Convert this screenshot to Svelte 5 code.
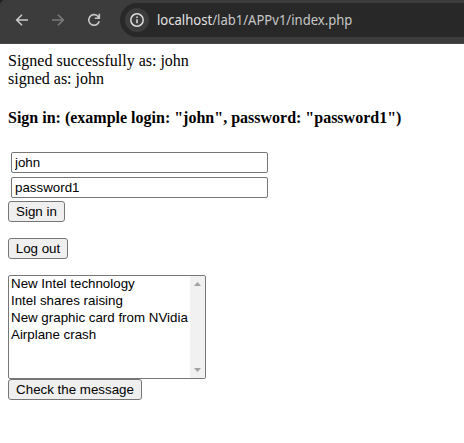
<script>
  let login = $state('john');
  let password = $state('password1');
  const messages = [
    'New Intel technology',
    'Intel shares raising',
    'New graphic card from NVidia',
    'Airplane crash'
  ];
</script>

<div class="window">
  <header class="toolbar">
    <svg class="icon" viewBox="0 0 16 16"><path d="M14 8H3M8 2.7 2.7 8 8 13.3" /></svg>
    <svg class="icon dim" viewBox="0 0 16 16"><path d="M2 8h11M8 2.7 13.3 8 8 13.3" /></svg>
    <svg class="icon" viewBox="0 0 16 16"><path d="M13.2 9.2A5.3 5.3 0 1 1 11.8 4.2L13.3 5.8M13.3 1.8V6.3H8.8" /></svg>
    <div class="address">
      <span class="info">
        <svg viewBox="0 0 16 16"><circle cx="8" cy="8" r="6.2" /><path d="M8 7.2v4M8 4.5v1.5" /></svg>
      </span>
      <span class="url"><b>localhost</b>/lab1/APPv1/index.php</span>
    </div>
  </header>
  <main>
    <div class="line">Signed successfully as: john</div>
    <div class="line">signed as: john</div>
    <h4>Sign in: (example login: "john", password: "password1")</h4>
    <div class="fields">
      <input type="text" bind:value={login} />
      <input type="text" bind:value={password} />
    </div>
    <button class="signin">Sign in</button>
    <button class="logout">Log out</button>
    <div class="list">
      <ul>
        {#each messages as message}
          <li>{message}</li>
        {/each}
      </ul>
      <div class="scroll">
        <svg viewBox="0 0 7 4"><path d="M0 4 3.5 0 7 4z" /></svg>
        <svg viewBox="0 0 7 4"><path d="M0 0 3.5 4 7 0z" /></svg>
      </div>
    </div>
    <button class="check">Check the message</button>
  </main>
</div>

<style>
  :global(body) { margin: 0; background: #fff; overflow: hidden; }
  .window { width: 464px; height: 443px; overflow: hidden; background: linear-gradient(#202020 0 20px, #fff 20px); }
  .toolbar {
    box-sizing: border-box;
    height: 44px;
    display: flex;
    align-items: flex-start;
    padding: 3px 0 0 14px;
    background: #3c3c3c;
    border-bottom: 1px solid #484848;
    border-radius: 5px 0 0 0;
  }
  .icon {
    flex: none;
    width: 16px;
    height: 16px;
    margin: 9px 20px 0 0;
    fill: none;
    stroke: #c7c7c7;
    stroke-width: 1.6;
  }
  .dim { stroke: #7b7b7b; }
  .address {
    flex: 1;
    box-sizing: border-box;
    height: 34px;
    margin-left: -2px;
    padding-left: 5px;
    display: flex;
    align-items: center;
    background: #282828;
    border-radius: 17px 0 0 17px;
  }
  .info {
    width: 24px;
    height: 24px;
    display: flex;
    align-items: center;
    justify-content: center;
    border-radius: 50%;
    background: #3c3c3c;
  }
  .info svg { width: 16px; height: 16px; fill: none; stroke: #dedede; stroke-width: 1.5; }
  .url {
    margin-left: 8px;
    font: 14px/20px "Noto Sans", sans-serif;
    color: #c7c7c7;
    white-space: nowrap;
    transform: scaleX(0.933);
    transform-origin: 0 50%;
  }
  .url b { font-weight: 400; color: #e3e3e3; }
  main {
    display: flex;
    flex-direction: column;
    align-items: flex-start;
    padding: 8px 8px 0;
    font: 16px/18px "Liberation Serif", serif;
    color: #000;
  }
  h4 { margin: 21px 0 25px; font-size: 16px; line-height: 18px; white-space: nowrap; }
  .fields { display: flex; flex-direction: column; gap: 4px; padding-left: 3px; }
  input, button, .list {
    box-sizing: border-box;
    font-family: "Liberation Sans", Arial, sans-serif;
    font-size: 13.333px;
    color: #000;
    border: 1px solid #767676;
  }
  input {
    width: 257px;
    height: 21px;
    margin: 0;
    padding: 1px 3px;
    border-radius: 2px;
    background: #fff;
    outline: none;
  }
  button {
    height: 21px;
    margin: 0;
    padding: 0;
    line-height: 15px;
    text-align: center;
    border-radius: 3px;
    background: #efefef;
    white-space: nowrap;
  }
  .signin { width: 57px; margin-top: 3px; }
  .logout { width: 60px; margin: 16px 0; }
  .check { width: 134px; }
  .list { width: 198px; height: 104px; display: flex; border-radius: 2px; background: #fff; overflow: hidden; }
  ul { flex: 1; margin: 0; padding: 0; list-style: none; }
  li { height: 17px; padding-left: 2px; line-height: 16px; white-space: nowrap; }
  .scroll {
    width: 15px;
    box-sizing: border-box;
    display: flex;
    flex-direction: column;
    align-items: center;
    justify-content: space-between;
    padding: 6px 0;
    background: #f1f1f1;
  }
  .scroll svg { width: 7px; height: 4px; fill: #a3a3a3; }
</style>
